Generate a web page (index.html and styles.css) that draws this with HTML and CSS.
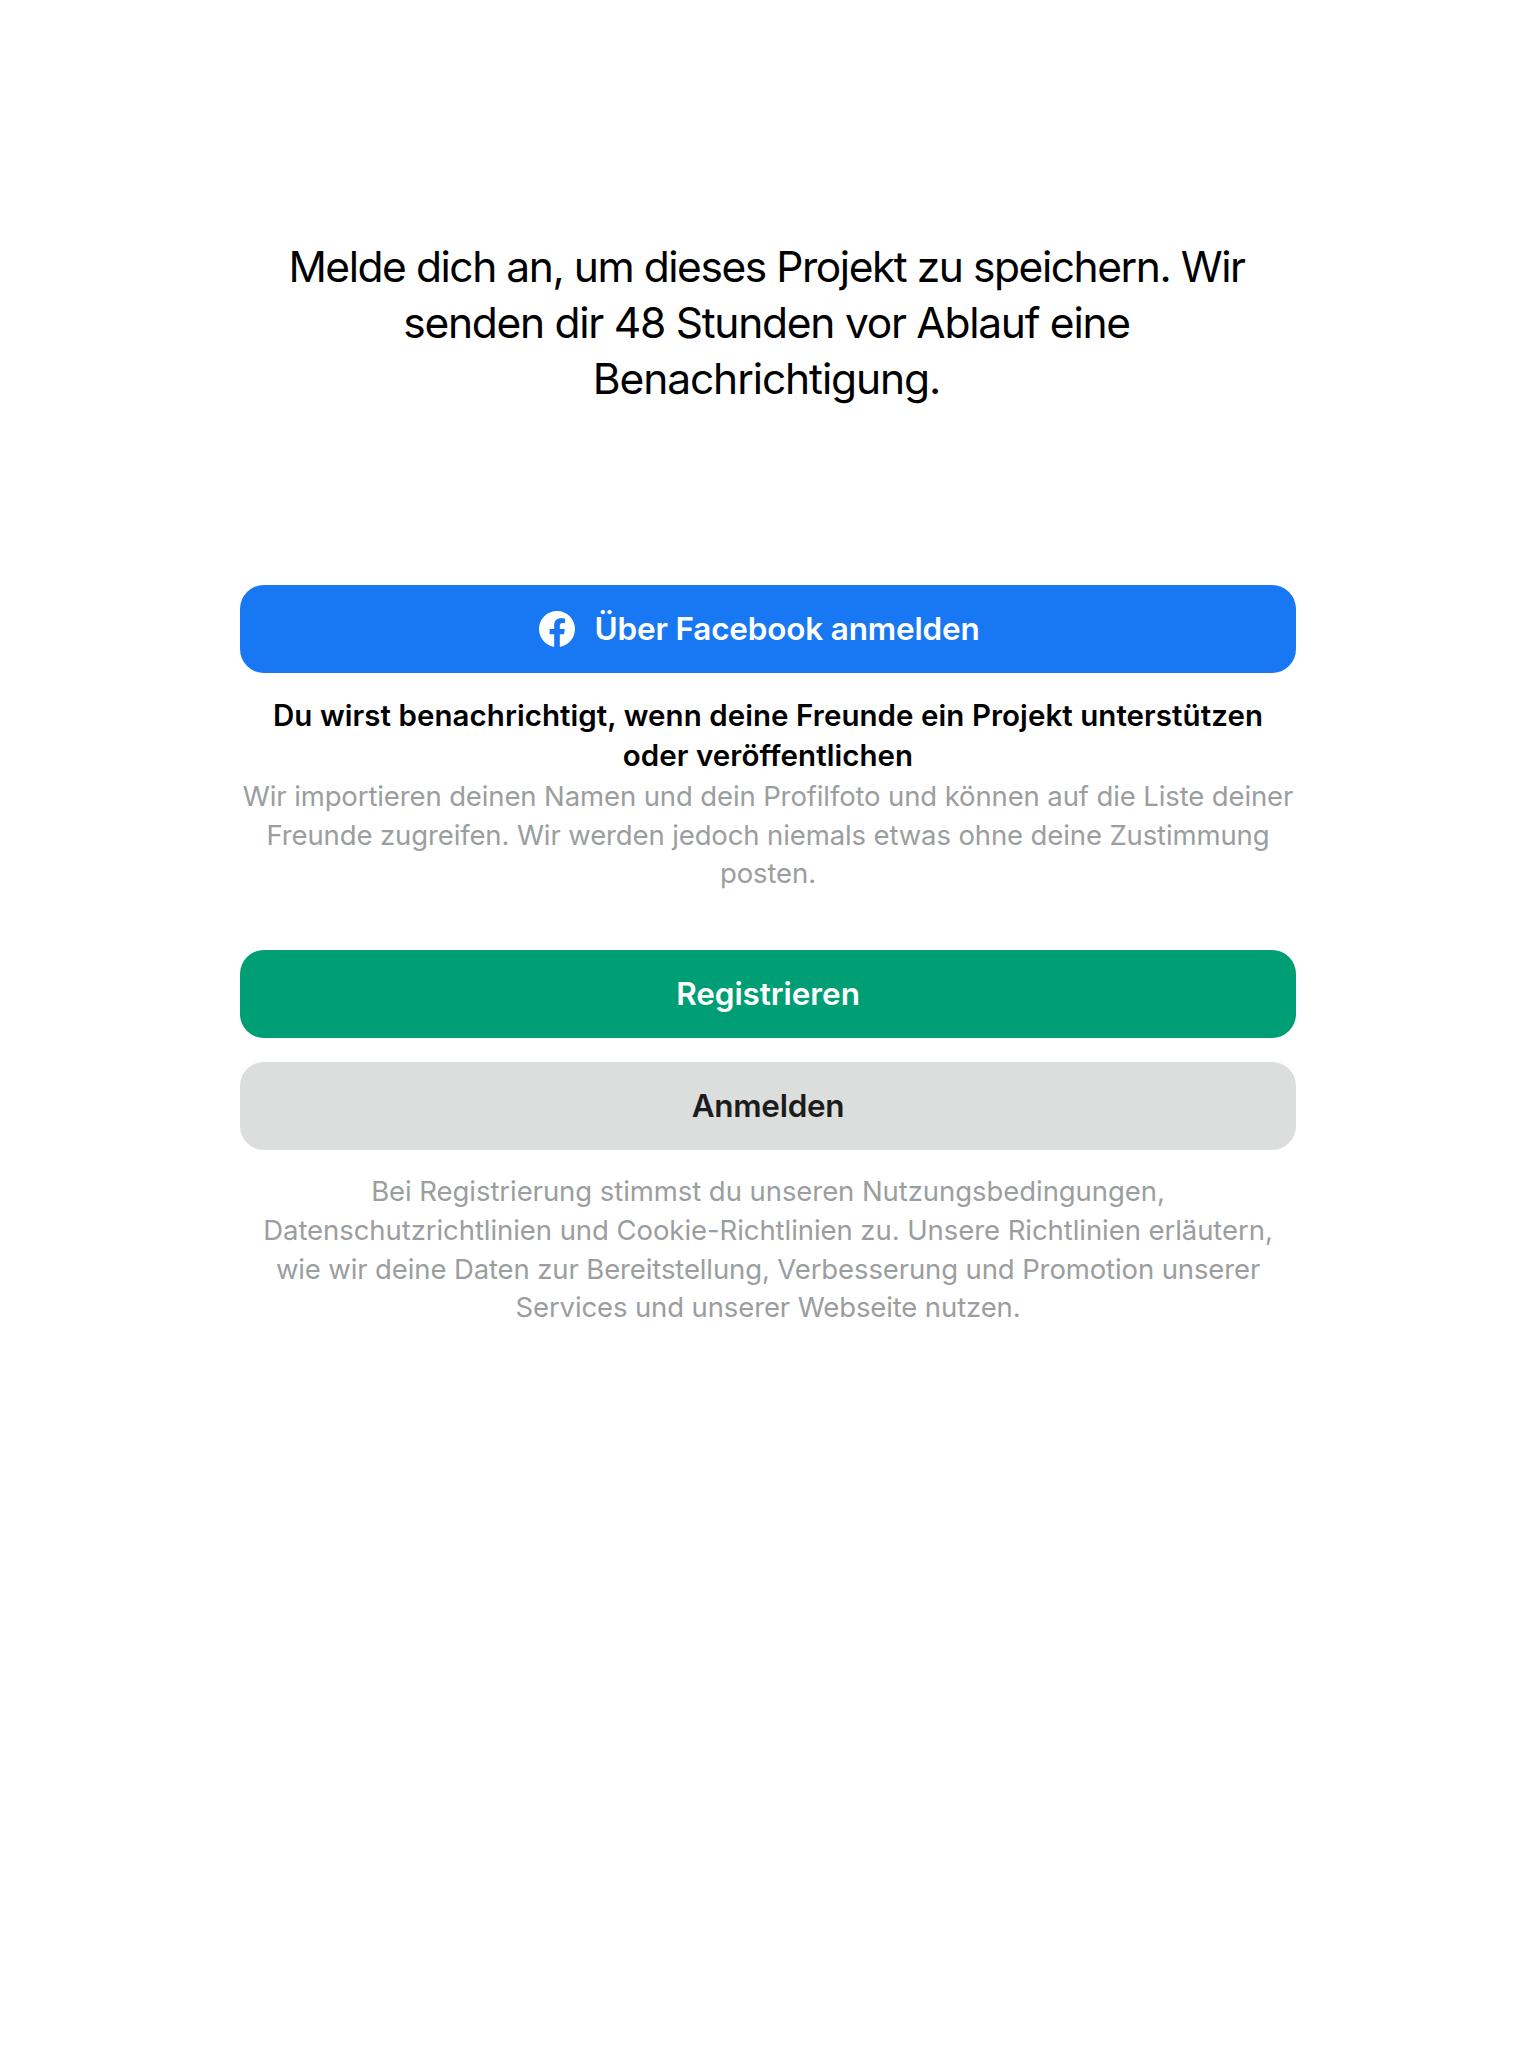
FILE: index.html
```html
<!DOCTYPE html>
<html lang="de">
<head>
<meta charset="utf-8">
<title>Anmelden</title>
<link rel="stylesheet" href="styles.css">
</head>
<body>
<main class="login">
  <h1 class="headline">
    <span class="line">Melde dich an, um dieses Projekt zu speichern. Wir</span>
    <span class="line headline-second">senden dir 48 Stunden vor Ablauf eine</span>
    <span class="line headline-third">Benachrichtigung.</span>
  </h1>

  <section class="facebook">
    <button class="button button-facebook" type="button">
      <svg class="facebook-icon" viewBox="0 0 24 24" aria-hidden="true"><path d="M24 12.073c0-6.627-5.373-12-12-12s-12 5.373-12 12c0 5.99 4.388 10.954 10.125 11.854v-8.385H7.078v-3.47h3.047V9.43c0-3.007 1.792-4.669 4.533-4.669 1.312 0 2.686.235 2.686.235v2.953H15.83c-1.491 0-1.956.925-1.956 1.874v2.25h3.328l-.532 3.47h-2.796v8.385C19.612 23.027 24 18.062 24 12.073z"/></svg>
      <span>Über Facebook anmelden</span>
    </button>
    <p class="notice">
      <span class="line">Du wirst benachrichtigt, wenn deine Freunde ein Projekt unterstützen</span>
      <span class="line">oder veröffentlichen</span>
    </p>
    <p class="fineprint">
      <span class="line">Wir importieren deinen Namen und dein Profilfoto und können auf die Liste deiner</span>
      <span class="line">Freunde zugreifen. Wir werden jedoch niemals etwas ohne deine Zustimmung</span>
      <span class="line">posten.</span>
    </p>
  </section>

  <section class="account">
    <button class="button button-register" type="button">Registrieren</button>
    <button class="button button-login" type="button">Anmelden</button>
  </section>

  <p class="fineprint terms">
    <span class="line terms-open">Bei Registrierung stimmst du unseren Nutzungsbedingungen,</span>
    <span class="line terms-open">Datenschutzrichtlinien und Cookie-Richtlinien zu. Unsere Richtlinien erläutern,</span>
    <span class="line">wie wir deine Daten zur Bereitstellung, Verbesserung und Promotion unserer</span>
    <span class="line">Services und unserer Webseite nutzen.</span>
  </p>
</main>
</body>
</html>
```

FILE: styles.css
```css
* {
  box-sizing: border-box;
}

body {
  margin: 0;
  min-height: 2048px;
  background: #fff;
  color: #000;
  font-family: Inter, "Liberation Sans", sans-serif;
}

.login {
  display: flex;
  flex-direction: column;
  width: 1056px;
  margin: 0 auto;
  padding-top: 239px;
  text-align: center;
}

.line {
  display: block;
  white-space: nowrap;
}

.headline {
  margin: 0 0 178px;
  padding-right: 3px;
  font-size: 42.5px;
  font-weight: 400;
  line-height: 56px;
  letter-spacing: -1.45px;
}

.headline-second {
  letter-spacing: -1.26px;
}

.headline-third {
  letter-spacing: -1.1px;
}

.button {
  display: flex;
  align-items: center;
  justify-content: center;
  width: 100%;
  height: 88px;
  padding: 0;
  border: 0;
  border-radius: 24px;
  font-family: inherit;
  font-size: 31.5px;
  font-weight: 600;
  line-height: 40px;
}

.button-facebook {
  gap: 19px;
  padding-right: 17px;
  background: #1877f2;
  color: #fff;
  letter-spacing: -0.174px;
}

.facebook-icon {
  width: 36px;
  height: 36px;
  fill: #fff;
}

.notice {
  margin: 22px 0 0;
  font-size: 29.5px;
  font-weight: 600;
  line-height: 40px;
  letter-spacing: 0.054px;
}

.fineprint {
  margin: 2px 0 0;
  color: #9b9e9e;
  font-size: 27.5px;
  line-height: 38.67px;
  letter-spacing: -0.12px;
}

.account {
  display: flex;
  flex-direction: column;
  gap: 24px;
  margin-top: 57px;
}

.button-register {
  background: #009e74;
  color: #fff;
  letter-spacing: -0.07px;
}

.button-login {
  background: #dcdedd;
  color: #1c1c1c;
  letter-spacing: -0.3px;
}

.terms {
  margin-top: 22.4px;
}

.terms-open {
  letter-spacing: -0.063px;
}
```
